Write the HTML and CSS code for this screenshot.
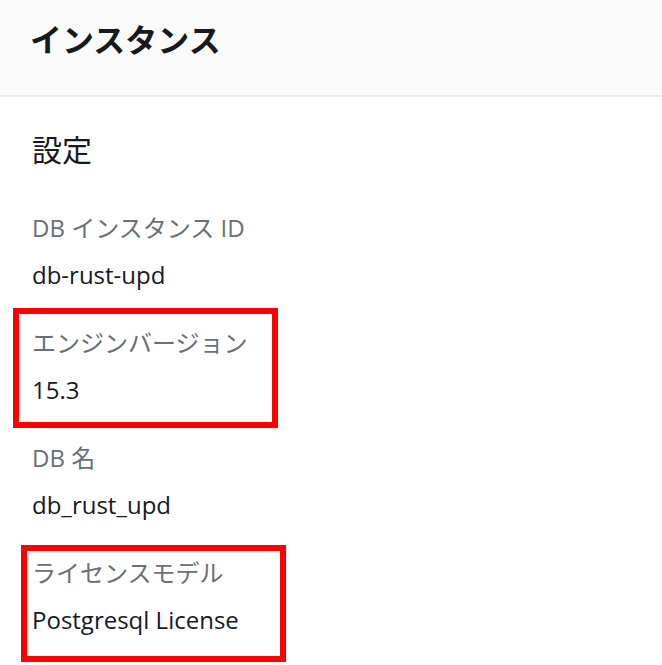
FILE: index.html
```html
<!DOCTYPE html>
<html lang="ja">
<head>
    <meta charset="UTF-8">
    <meta name="viewport" content="width=device-width, initial-scale=1.0">
    <title>インスタンス</title>
    <link rel="stylesheet" href="styles.css">
</head>
<body>
    <div class="panel">
        <div class="panelHeader">
            <h1>インスタンス</h1>
        </div>
        <div class="panelBody">
            <h2>設定</h2>
            <div class="fieldList">
                <div class="field">
                    <div class="fieldLabel">DB インスタンス ID</div>
                    <div class="fieldValue">db-rust-upd</div>
                </div>
                <div class="field mark markFirst">
                    <div class="fieldLabel">エンジンバージョン</div>
                    <div class="fieldValue">15.3</div>
                </div>
                <div class="field">
                    <div class="fieldLabel">DB 名</div>
                    <div class="fieldValue">db_rust_upd</div>
                </div>
                <div class="field mark markSecond">
                    <div class="fieldLabel">ライセンスモデル</div>
                    <div class="fieldValue">Postgresql License</div>
                </div>
            </div>
        </div>
    </div>
</body>
</html>
```

FILE: styles.css
```css
*{
    margin: 0;
    padding: 0;
    box-sizing: border-box;
    font-family: "Open Sans", "Noto Sans CJK JP", sans-serif;
}
html, body{
    width: 100%;
    height: 100%;
    overflow: hidden;
    background-color: #fff;
}
.panelHeader{
    height: 97px;
    padding: 0 30px;
    display: flex;
    align-items: center;
    background-color: #fafafa;
    border-bottom: 2px solid #eaeded;
}
.panelHeader h1{
    font-size: 32px;
    line-height: 40px;
    font-weight: 700;
    color: #16191f;
    margin-top: -16px;
}
.panelBody{
    padding: 33px 32px 0;
}
.panelBody h2{
    font-size: 30px;
    line-height: 40px;
    font-weight: 400;
    color: #16191f;
}
.fieldList{
    margin-top: 41px;
    display: flex;
    flex-direction: column;
    gap: 34px;
}
.field{
    display: flex;
    flex-direction: column;
    gap: 13px;
}
.fieldLabel{
    font-size: 24px;
    line-height: 34px;
    color: #687078;
}
.fieldValue{
    font-size: 24px;
    line-height: 34px;
    color: #16191f;
}
.mark{
    border: 6px solid #ff0000;
    width: 265px;
}
.markFirst{
    margin: -18px 0 -21px -19px;
    padding: 12px 0 15px 13px;
}
.markSecond{
    margin: -11px 0 -25px -11px;
    padding: 5px 0 19px 5px;
}
```
